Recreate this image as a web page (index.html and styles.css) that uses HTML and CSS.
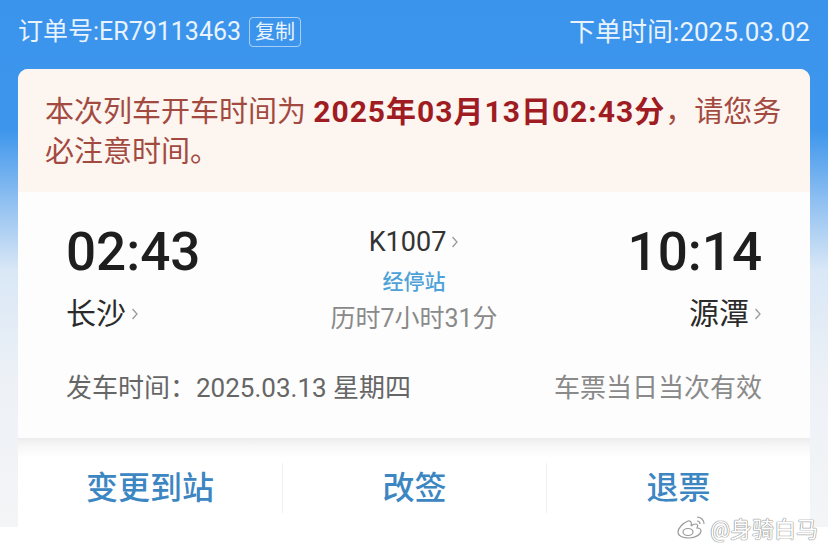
FILE: index.html
```html
<html>
  <head>
    <meta charset="utf-8">
    <link rel="stylesheet" href="styles.css">
  </head>
  <body>
    <div class="page">
      <!-- order number and order date on the blue band -->
      <header class="top">
        <div class="order">订单号:ER79113463<span class="copy">复制</span></div>
        <div class="ordered">下单时间:2025.03.02</div>
      </header>

      <div class="card">
        <div class="notice">本次列车开车时间为 <b>2025年03月13日02:43分</b>，请您务<br>必注意时间。</div>

        <div class="trip">
          <div class="route">
            <div class="end">
              <div class="time">02:43</div>
              <div class="station">长沙<svg class="chev" width="8" height="14" viewBox="0 0 8 14"><polyline points="1.5,2 6,7 1.5,12"/></svg></div>
            </div>
            <div class="mid">
              <div class="train">K1007<svg class="chev" width="8" height="14" viewBox="0 0 8 14"><polyline points="1.5,2 6,7 1.5,12"/></svg></div>
              <div class="stops">经停站</div>
              <div class="duration">历时7小时31分</div>
            </div>
            <div class="end end-right">
              <div class="time">10:14</div>
              <div class="station">源潭<svg class="chev" width="8" height="14" viewBox="0 0 8 14"><polyline points="1.5,2 6,7 1.5,12"/></svg></div>
            </div>
          </div>
          <div class="dates">
            <span>发车时间：2025.03.13 星期四</span>
            <span class="valid">车票当日当次有效</span>
          </div>
        </div>

        <div class="actions">
          <div class="action">变更到站</div>
          <div class="action">改签</div>
          <div class="action">退票</div>
        </div>
      </div>

      <div class="mark">
        <svg width="32" height="26" viewBox="0 0 32 26">
          <path d="M12 7c-5 2-10 7-10 11 0 4 5 6 11 6 7 0 12-4 12-7 0-3-3-3-4-3 1-2 1-4-1-4-2 0-4 1-5 2 1-3 0-6-3-5z"/>
          <ellipse cx="12" cy="18" rx="5" ry="3.5"/>
          <path class="wave" d="M21 3c4 0 7 3 7 7M21 7c2 0 3 1 3 3"/>
        </svg>
        <span>@身骑白马</span>
      </div>
    </div>
  </body>
</html>
```

FILE: styles.css
```css
html, body{
  margin: 0;
  background: #ffffff;
}
body{
  width: 828px;
  height: 547px;
  overflow: hidden;
  font-family: Roboto, 'Noto Sans CJK SC', sans-serif;
}
.page{
  position: relative;
  height: 527px;
  background: linear-gradient(#3b94ec 0, #3e96ec 130px, #8ebff1 200px, #d9e7f6 270px, #edf1f6 380px, #f4f5f7 527px);
}

/* blue band */
.top{
  height: 69px;
  box-sizing: border-box;
  padding: 16px 18px 0;
  display: flex;
  justify-content: space-between;
  align-items: flex-start;
  color: #e9f3fe;
  font-size: 26px;
  line-height: 32px;
}
.order{
  display: flex;
  align-items: center;
  font-size: 25px;
}
.copy{
  margin-left: 8px;
  padding: 0 5px;
  height: 28px;
  line-height: 28px;
  font-size: 20px;
  border: 1.5px solid rgba(255, 255, 255, 0.55);
  border-radius: 4px;
}

/* card */
.card{
  margin: 0 18px;
  border-radius: 10px 10px 0 0;
  overflow: hidden;
  background: #fdfdfd;
}
.notice{
  background: #fdf5f0;
  padding: 23px 27px 20px;
  font-size: 29px;
  line-height: 40px;
  color: #a34a40;
  white-space: nowrap;
}
.notice b{
  color: #9e1c22;
  font-weight: 700;
  font-size: 30px;
  letter-spacing: 1px;
}

.trip{
  padding: 30px 48px 32px;
}
.route{
  display: grid;
  grid-template-columns: 1fr auto 1fr;
}
.end{
  display: flex;
  flex-direction: column;
  align-items: flex-start;
}
.end-right{
  align-items: flex-end;
}
.time{
  font-size: 53px;
  line-height: 60px;
  font-weight: 500;
  color: #1e1e1e;
}
.station{
  margin-top: 12px;
  font-size: 30px;
  line-height: 40px;
  color: #2a2a2a;
  display: flex;
  align-items: center;
}
.chev{
  margin-left: 5px;
  fill: none;
  stroke: #9a9a9a;
  stroke-width: 1.3;
}
.mid{
  padding-top: 3px;
  display: flex;
  flex-direction: column;
  align-items: center;
}
.train{
  font-size: 27px;
  line-height: 34px;
  color: #333333;
  display: flex;
  align-items: center;
}
.stops{
  margin-top: 9px;
  font-size: 21px;
  line-height: 28px;
  font-weight: 500;
  color: #4ea2d8;
}
.duration{
  margin-top: 7px;
  font-size: 25px;
  line-height: 32px;
  color: #8a8a8a;
}
.dates{
  margin-top: 35px;
  display: flex;
  justify-content: space-between;
  font-size: 26px;
  line-height: 36px;
  color: #666666;
}
.dates .valid{
  color: #8a8a8a;
}

/* bottom buttons */
.actions{
  display: grid;
  grid-template-columns: 1fr 1fr 1fr;
  padding: 25px 0 15px;
  background: linear-gradient(#ececec 0, #f7f7f7 8px, #ffffff 20px);
}
.action{
  text-align: center;
  font-size: 32px;
  line-height: 50px;
  font-weight: 500;
  color: #3c86c2;
}
.action + .action{
  border-left: 1px solid #f0f0f0;
}

/* watermark over the bottom right corner */
.mark{
  position: absolute;
  right: 10px;
  bottom: -16px;
  display: flex;
  align-items: center;
  gap: 2px;
  font-size: 22px;
  color: #ffffff;
  text-shadow: 0 0 1px #888, 0 0 1px #888, 0 0 1px #888;
}
.mark svg{
  fill: #ffffff;
  stroke: #9a9a9a;
  stroke-width: 1.2;
}
.mark .wave{
  fill: none;
}
```
